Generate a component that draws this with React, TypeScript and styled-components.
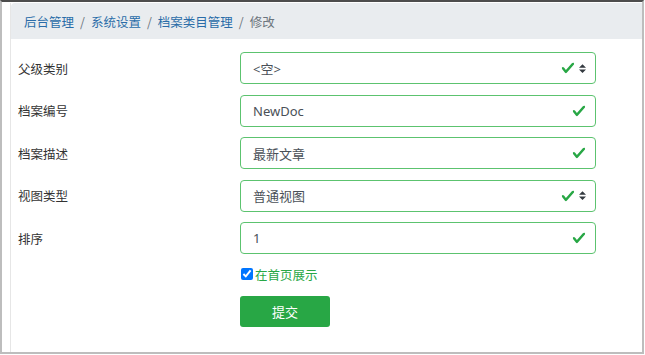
import styled, { createGlobalStyle } from "styled-components";

const GlobalStyle = createGlobalStyle`
  html, body {
    margin: 0;
    padding: 0;
    background: #ffffff;
  }
  body {
    font-family: "Noto Sans", "Noto Sans CJK SC", sans-serif;
    font-size: 13px;
    color: #333333;
  }
`;

const fields = [
  { label: "父级类别", value: "<空>", select: true },
  { label: "档案编号", value: "NewDoc", select: false },
  { label: "档案描述", value: "最新文章", select: false },
  { label: "视图类型", value: "普通视图", select: true },
  { label: "排序", value: "1", select: false },
];

const CheckIcon = () => (
  <svg width="14" height="14" viewBox="0 0 8 8">
    <path
      fill="#28a745"
      d="M2.3 6.73L.6 4.53c-.4-1.04.46-1.4 1.1-.8l1.1 1.4 3.4-3.8c.6-.63 1.6-.27 1.2.7l-4 4.6c-.43.5-.8.4-1.1.1z"
    />
  </svg>
);

const SortIcon = () => (
  <svg width="7" height="9" viewBox="0 0 4 5">
    <path fill="#343a40" d="M2 0L0 2h4zm0 5L0 3h4z" />
  </svg>
);

const App = () => {
  return (
    <>
      <GlobalStyle />
      <Frame>
        <Panel>
          <Breadcrumb>
            <Crumb>后台管理</Crumb>
            <Sep>/</Sep>
            <Crumb>系统设置</Crumb>
            <Sep>/</Sep>
            <Crumb>档案类目管理</Crumb>
            <Sep>/</Sep>
            <Crumb $active>修改</Crumb>
          </Breadcrumb>
          <Form>
            {fields.map((f) => (
              <Row key={f.label}>
                <Label>{f.label}</Label>
                <Field>
                  <Value>{f.value}</Value>
                  <Icons>
                    <CheckIcon />
                    {f.select && <SortIcon />}
                  </Icons>
                </Field>
              </Row>
            ))}
            <Row>
              <span />
              <CheckLine>
                <input type="checkbox" defaultChecked />
                在首页展示
              </CheckLine>
            </Row>
            <Row>
              <span />
              <SubmitRow>
                <Submit>提交</Submit>
              </SubmitRow>
            </Row>
          </Form>
        </Panel>
      </Frame>
    </>
  );
};

const Frame = styled.div`
  box-sizing: border-box;
  width: 644px;
  height: 354px;
  border-left: 2px solid #bdbdbd;
  border-right: 2px solid #bdbdbd;
  border-bottom: 2px solid #bdbdbd;
  border-top: 2px solid #4d4d4d;
  padding: 1px 0 0 8px;
  overflow: hidden;
`;

const Panel = styled.div`
  height: 100%;
  border-left: 1px solid #e6e6e6;
`;

const Breadcrumb = styled.div`
  display: flex;
  align-items: center;
  height: 36px;
  padding-left: 13px;
  background: #e9ecef;
  border-top-left-radius: 4px;
  font-family: "Noto Sans CJK SC", sans-serif;
  font-size: 12.5px;
`;

const Crumb = styled.span<{ $active?: boolean }>`
  color: ${(p) => (p.$active ? "#6c757d" : "#2a6ca8")};
`;

const Sep = styled.span`
  color: #6c757d;
  padding: 0 6px;
`;

const Form = styled.div`
  display: flex;
  flex-direction: column;
  padding: 13px 0 0 7px;
`;

const Row = styled.div`
  display: grid;
  grid-template-columns: 222px 356px;
  align-items: center;
  margin-bottom: 10.5px;
`;

const Label = styled.div`
  font-family: "Noto Sans CJK SC", sans-serif;
  font-size: 12.5px;
  color: #333333;
`;

const Field = styled.div`
  box-sizing: border-box;
  display: flex;
  align-items: center;
  justify-content: space-between;
  height: 32px;
  padding: 0 9px 0 12px;
  border: 1px solid #5cc36f;
  border-radius: 4px;
  background: #ffffff;
`;

const Value = styled.span`
  font-family: "Noto Sans", "Noto Sans CJK SC", sans-serif;
  font-size: 13px;
  color: #495057;
`;

const Icons = styled.span`
  display: flex;
  align-items: center;
  gap: 4px;
`;

const CheckLine = styled.label`
  display: flex;
  align-items: center;
  gap: 2px;
  font-family: "Noto Sans CJK SC", sans-serif;
  font-size: 12.5px;
  color: #28a745;

  & input {
    margin: 0 0 0 1px;
    width: 12px;
    height: 12px;
  }
`;

const SubmitRow = styled.div`
  display: flex;
  margin-top: 2px;
`;

const Submit = styled.button`
  width: 90px;
  height: 31px;
  border: none;
  border-radius: 3px;
  background: #28a745;
  color: #ffffff;
  font-family: "Noto Sans CJK SC", sans-serif;
  font-size: 13px;
  cursor: pointer;
`;

export default App;
